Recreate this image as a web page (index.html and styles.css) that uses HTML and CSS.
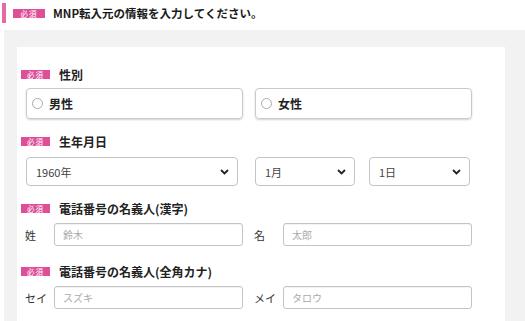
FILE: index.html
```html
<!DOCTYPE html>
<html lang="ja">
<head>
<meta charset="utf-8">
<link rel="stylesheet" href="styles.css">
</head>
<body>
<div class="head">
  <span class="bar"></span>
  <span class="badge">必須</span>
  <h1 class="title">MNP転入元の情報を入力してください。</h1>
</div>
<div class="panel">
  <div class="card">
    <div class="field f1">
      <div class="label"><span class="badge">必須</span><span class="ltext">性別</span></div>
      <div class="radios">
        <label class="radio"><span class="circle"></span><span>男性</span></label>
        <label class="radio"><span class="circle"></span><span>女性</span></label>
      </div>
    </div>
    <div class="field f2">
      <div class="label"><span class="badge">必須</span><span class="ltext">生年月日</span></div>
      <div class="selects">
        <div class="select s-year"><span>1960年</span><svg class="chev" viewBox="0 0 9 6" width="9" height="6"><polyline points="1,1 4.5,4.5 8,1" fill="none" stroke="#222" stroke-width="1.8"/></svg></div>
        <div class="select s-month"><span>1月</span><svg class="chev" viewBox="0 0 9 6" width="9" height="6"><polyline points="1,1 4.5,4.5 8,1" fill="none" stroke="#222" stroke-width="1.8"/></svg></div>
        <div class="select s-day"><span>1日</span><svg class="chev" viewBox="0 0 9 6" width="9" height="6"><polyline points="1,1 4.5,4.5 8,1" fill="none" stroke="#222" stroke-width="1.8"/></svg></div>
      </div>
    </div>
    <div class="field f3">
      <div class="label"><span class="badge">必須</span><span class="ltext">電話番号の名義人(漢字)</span></div>
      <div class="inputs">
        <div class="pair"><span class="plabel">姓</span><div class="input">鈴木</div></div>
        <div class="pair"><span class="plabel">名</span><div class="input">太郎</div></div>
      </div>
    </div>
    <div class="field f4">
      <div class="label"><span class="badge">必須</span><span class="ltext">電話番号の名義人(全角カナ)</span></div>
      <div class="inputs">
        <div class="pair"><span class="plabel">セイ</span><div class="input">スズキ</div></div>
        <div class="pair"><span class="plabel">メイ</span><div class="input">タロウ</div></div>
      </div>
    </div>
  </div>
</div>
</body>
</html>
```
FILE: styles.css
```css
* { box-sizing: border-box; }
html, body { margin: 0; padding: 0; background: #fff; height: 100%; }
body {
  font-family: "Noto Sans CJK JP", "Noto Sans", sans-serif;
  color: #222;
  overflow: hidden;
}
.head {
  display: flex;
  align-items: center;
  height: 20px;
  margin-top: 3px;
  padding-left: 2px;
}
.bar {
  width: 4px;
  height: 20px;
  background: #e46aa7;
}
.badge {
  display: inline-block;
  background: #df4f98;
  color: #fff;
  font-size: 7.5px;
  line-height: 9px;
  height: 9px;
  width: 29px;
  text-align: center;
  letter-spacing: 1px;
}
.head .badge { margin-left: 7px; width: 32px; }
.title {
  margin: 0 0 0 8px;
  font-size: 11.5px;
  font-weight: bold;
  line-height: 20px;
  color: #1a1a1a;
}
.panel {
  margin: 7px 0 0 4px;
  background: #f2f2f2;
  padding: 17px 20px 0 13px;
  height: 291px;
  overflow: hidden;
}
.card {
  background: #fff;
  height: 274px;
  padding: 19px 0 0 4px;
}
.label {
  display: flex;
  align-items: center;
  height: 16px;
}
.ltext {
  margin-left: 9px;
  font-size: 12px;
  font-weight: bold;
  color: #222;
}
.radios, .selects, .inputs {
  display: flex;
  margin-left: 5px;
}
.f1 .radios { margin-top: 6px; gap: 12px; }
.radio {
  width: 217px;
  height: 31px;
  border: 1px solid #c9c9c9;
  border-radius: 4px;
  box-shadow: 0 1px 2px rgba(0,0,0,0.18);
  display: flex;
  align-items: center;
  padding-left: 5px;
  font-size: 12px;
  font-weight: bold;
}
.circle {
  width: 11px;
  height: 11px;
  border: 1px solid #aaa;
  border-radius: 50%;
  margin-right: 6px;
  background: #fff;
}
.f2 { margin-top: 14px; }
.f2 .selects { margin-top: 8px; }
.select {
  height: 29px;
  border: 1px solid #c4c4c4;
  border-radius: 4px;
  display: flex;
  align-items: center;
  justify-content: space-between;
  padding: 0 8px 0 9px;
  font-size: 11px;
  color: #444;
}
.s-year { width: 212px; }
.s-month { width: 100px; margin-left: 17px; }
.s-day { width: 101px; margin-left: 14px; }
.f3 { margin-top: 14px; }
.f4 { margin-top: 17px; }
.f3 .inputs, .f4 .inputs { margin-top: 7px; margin-left: 4px; }
.pair {
  display: flex;
  align-items: center;
  width: 229px;
}
.plabel {
  width: 29px;
  font-size: 11px;
  color: #333;
}
.input {
  width: 189px;
  height: 23px;
  border: 1px solid #c4c4c4;
  border-radius: 3px;
  box-shadow: inset 0 1px 1px rgba(0,0,0,0.05);
  font-size: 10px;
  color: #aaa;
  padding-left: 8px;
  line-height: 21px;
}
```
